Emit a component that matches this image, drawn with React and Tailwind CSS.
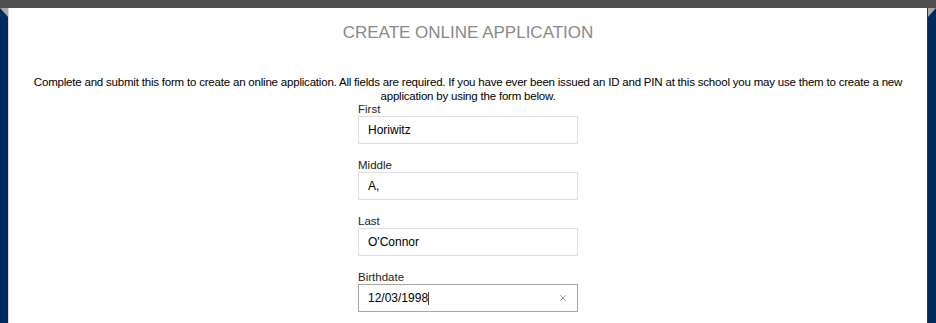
import { X } from "lucide-react";

const fields = [
  { label: "First", value: "Horiwitz" },
  { label: "Middle", value: "A," },
  { label: "Last", value: "O'Connor" },
];

const SideStrip = ({ side }) => (
  <div className="relative w-[9px] bg-[#012b60]">
    <svg
      className="absolute top-0 left-0"
      width="9"
      height="10"
      viewBox="0 0 9 10"
    >
      {side === "left" ? (
        <polygon points="0,0 9,0 9,10" fill="#a9a9a9" />
      ) : (
        <polygon points="0,0 9,0 0,10" fill="#a9a9a9" />
      )}
    </svg>
    <div
      className={
        side === "left"
          ? "absolute top-0 right-0 h-full w-px bg-[#d8dbe0]"
          : "absolute top-0 left-0 h-full w-px bg-[#1a3a68]"
      }
    />
  </div>
);

const App = () => {
  return (
    <div className="h-[323px] w-[936px] overflow-hidden flex flex-col font-['Liberation_Sans',Arial,sans-serif]">
      <div className="h-2 bg-[#4f4f4f]" />

      <div className="flex flex-1">
        <SideStrip side="left" />

        <main className="flex-1 bg-white pt-[14px] px-4">
          <h1 className="text-center text-[17px] leading-[22px] text-[#8a8a8a]">
            CREATE ONLINE APPLICATION
          </h1>

          <p className="mt-[31px] text-center text-[11.5px] leading-[14px] tracking-[-0.2px] text-black">
            Complete and submit this form to create an online application. All
            fields are required. If you have ever been issued an ID and PIN at
            this school you may use them to create a new application by using
            the form below.
          </p>

          <form className="mx-auto w-[220px] -mt-px">
            {fields.map((f) => (
              <div key={f.label} className="mb-[14px]">
                <label className="block text-[11.5px] leading-[14px] text-[#222]">
                  {f.label}
                </label>
                <div className="h-[28px] border border-[#dedede] flex items-center px-[9px] text-[12px] text-black">
                  {f.value}
                </div>
              </div>
            ))}

            <div>
              <label className="block text-[11.5px] leading-[14px] text-[#222]">
                Birthdate
              </label>
              <div className="h-[28px] border border-[#a6a6a6] flex items-center justify-between pl-[9px] pr-[9px] text-[12px] text-black">
                <span className="flex items-center">
                  12/03/1998
                  <span className="inline-block w-px h-[13px] bg-[#444]" />
                </span>
                <X className="size-[10px] text-[#888]" strokeWidth={2} />
              </div>
            </div>
          </form>
        </main>

        <SideStrip side="right" />
      </div>
    </div>
  );
};

export default App;
